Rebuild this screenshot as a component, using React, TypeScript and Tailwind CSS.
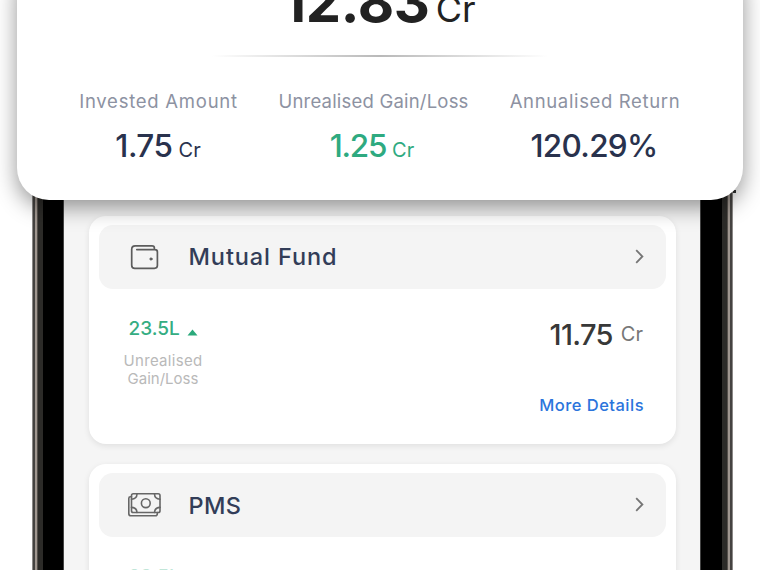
import React from 'react';
import clsx from 'clsx';

const stats = [
  { label: 'Invested Amount', value: '1.75', unit: 'Cr', width: 'w-[157px]', spacing: 'tracking-[0.75px]', valueSpacing: 'ml-[-1px] tracking-[-0.5px]', green: false },
  { label: 'Unrealised Gain/Loss', value: '1.25', unit: 'Cr', width: 'w-[189px]', spacing: 'tracking-[0.2px]', valueSpacing: 'ml-[-3px] tracking-[-1.3px]', green: true },
  { label: 'Annualised Return', value: '120.29%', unit: '', width: 'w-[170px]', spacing: 'tracking-[0.65px]', valueSpacing: 'ml-[-2px] tracking-[-0.7px]', green: false },
];

function WalletIcon() {
  return (
    <svg width="34" height="26" viewBox="0 0 34 26" fill="none" stroke="#5c5c5c" strokeWidth="1.7" strokeLinecap="round" strokeLinejoin="round">
      <path d="M27.4 5.2V4.2Q27.4 1.9 25 1.9H8.2Q4.7 1.9 4.7 5.4V21.2Q4.7 24.3 7.8 24.3H27.4Q30.4 24.3 30.4 21.6V8Q30.4 5.6 28 5.6H9.8" />
      <circle cx="24" cy="15" r="1.1" fill="#5c5c5c" strokeWidth="1" />
    </svg>
  );
}

function CashIcon() {
  return (
    <svg width="34" height="26" viewBox="0 0 34 26" fill="none" stroke="#666666" strokeWidth="1.6" strokeLinecap="round" strokeLinejoin="round">
      <rect x="4.5" y="1.8" width="28.5" height="18.7" rx="1.8" />
      <path d="M4.5 4.8H3.4Q1.8 4.8 1.8 6.4V21.4Q1.8 23.8 4.2 23.8H28.4Q30.3 23.8 30.3 21.8V20.6" />
      <circle cx="18.8" cy="11.2" r="4.4" />
      <path d="M10 2Q9.8 7 4.5 7.2M27.5 2Q27.7 7 33 7.2M10 20.5Q9.8 15.6 4.5 15.4M27.5 20.5Q27.7 15.6 33 15.4" />
    </svg>
  );
}

function FundCard({ title, icon, spacing, children }: { title: string; icon: React.ReactNode; spacing: string; children: React.ReactNode }) {
  return (
    <div className="h-[228px] shrink-0 rounded-[17px] bg-white px-[10px] pt-[9px] shadow-[0_2px_6px_rgba(0,0,0,0.09)]">
      <div className="flex h-[63.5px] items-center rounded-[14px] bg-[#f4f4f4] pr-[22px] pl-[28px]">
        {icon}
        <span className={clsx('ml-[28px] text-[23.5px] leading-[30px] font-[450] text-[#323d58]', spacing)}>{title}</span>
        <svg className="ml-auto" width="9" height="15" viewBox="0 0 9 15" fill="none" stroke="#757575" strokeWidth="1.8">
          <path d="M1.2 1.2L7.4 7.5L1.2 13.8" />
        </svg>
      </div>
      {children}
    </div>
  );
}

function Edge({ side }: { side: 'left' | 'right' }) {
  return (
    <div className={clsx('flex shrink-0', side === 'right' ? 'w-[33px] flex-row-reverse' : 'w-[32px]')}>
      <div className="w-px bg-[#8b8987]" />
      <div className="w-[2px] bg-[#454341]" />
      <div className="w-[2px] bg-[#a09790]" />
      <div className="w-px bg-[#55504b]" />
      <div className="w-[5px] bg-[#2c2b28]" />
      <div className="flex-1 bg-black" />
      <div className="w-px bg-[#444444]" />
    </div>
  );
}

export default function App() {
  return (
    <div className="relative h-[570px] w-[760px] overflow-hidden bg-white font-['Inter',sans-serif] whitespace-nowrap">
      {/* phone body */}
      <div className="mt-[186px] ml-[32px] flex h-[384px] w-[701px] overflow-hidden">
        <Edge side="left" />
        <div className="flex flex-1 flex-col gap-[20px] bg-[#f5f5f5] pt-[30px] pr-[24px] pl-[24.5px]">
          <FundCard title="Mutual Fund" icon={<WalletIcon />} spacing="tracking-[0.9px]">
            <div className="flex justify-between pr-[23px] pl-[25px]">
              <div className="pt-[28.5px]">
                <div className="flex items-center pl-[5px]">
                  <span className="text-[19px] leading-[24px] font-medium text-[#35ad82]">23.5L</span>
                  <svg className="mt-[7px] ml-[7px]" width="11" height="7" viewBox="0 0 11 7" fill="#2ba97b">
                    <path d="M5.5 0.5L10.5 6.5H0.5Z" />
                  </svg>
                </div>
                <div className="mt-[11px] w-[79px] text-center text-[15px] leading-[18px] text-[#b9b9b9]">
                  <div className="tracking-[0.3px]">Unrealised</div>
                  <div>Gain/Loss</div>
                </div>
              </div>
              <div className="flex flex-col items-end pt-[30px]">
                <div className="flex items-start">
                  <span className="text-[29px] leading-[32px] font-medium tracking-[-0.65px] text-[#383838]">11.75</span>
                  <span className="ml-[8px] text-[20px] leading-[30px] text-[#777777]">Cr</span>
                </div>
                <span className="mt-[42px] mr-[-1px] text-[16.5px] leading-[24px] font-medium tracking-[0.48px] text-[#2b74dc]">More Details</span>
              </div>
            </div>
          </FundCard>
          <FundCard title="PMS" icon={<CashIcon />} spacing="mt-[2px] tracking-[0.4px]">
            <div className="pt-[28.5px] pl-[30px] text-[19px] leading-[24px] font-medium text-[#35ad82] opacity-30">23.5L</div>
          </FundCard>
        </div>
        <Edge side="right" />
      </div>
      <div className="absolute top-[190px] left-[733px] h-[3px] w-[3px] bg-[#333333]" />

      {/* summary card lying over the phone */}
      <div className="absolute top-[-40px] left-[17px] h-[240px] w-[726px] rounded-[32px] bg-white shadow-[0_7px_22px_rgba(0,0,0,0.42)]">
        <div className="mt-[9px] flex h-[66px] items-baseline pl-[265px] text-[#222222]">
          <span className="text-[56px] leading-[66px] font-bold tracking-[-0.3px]">12.83</span>
          <span className="ml-[6px] text-[36px] leading-[40px]">Cr</span>
        </div>
        <div className="mx-auto mt-[20px] h-[2px] w-[336px] bg-linear-to-r from-white via-[#b9b9b9] to-white" />
        <div className="mt-[32px] flex pl-[63px]">
          {stats.map((s) => (
            <div key={s.label} className={clsx('mr-[42px] flex shrink-0 flex-col items-center', s.width)}>
              <div className={clsx('text-[18.5px] leading-[24px] text-[#8d92a2]', s.spacing)}>{s.label}</div>
              <div className={clsx('mt-[17px] flex items-baseline', s.green ? 'text-[#2eaa80]' : 'text-[#29324d]')}>
                <span className={clsx('text-[31.5px] leading-[32px] font-medium', s.valueSpacing)}>{s.value}</span>
                {s.unit && <span className="ml-[6px] text-[20px] leading-[24px]">{s.unit}</span>}
              </div>
            </div>
          ))}
        </div>
      </div>
    </div>
  );
}
